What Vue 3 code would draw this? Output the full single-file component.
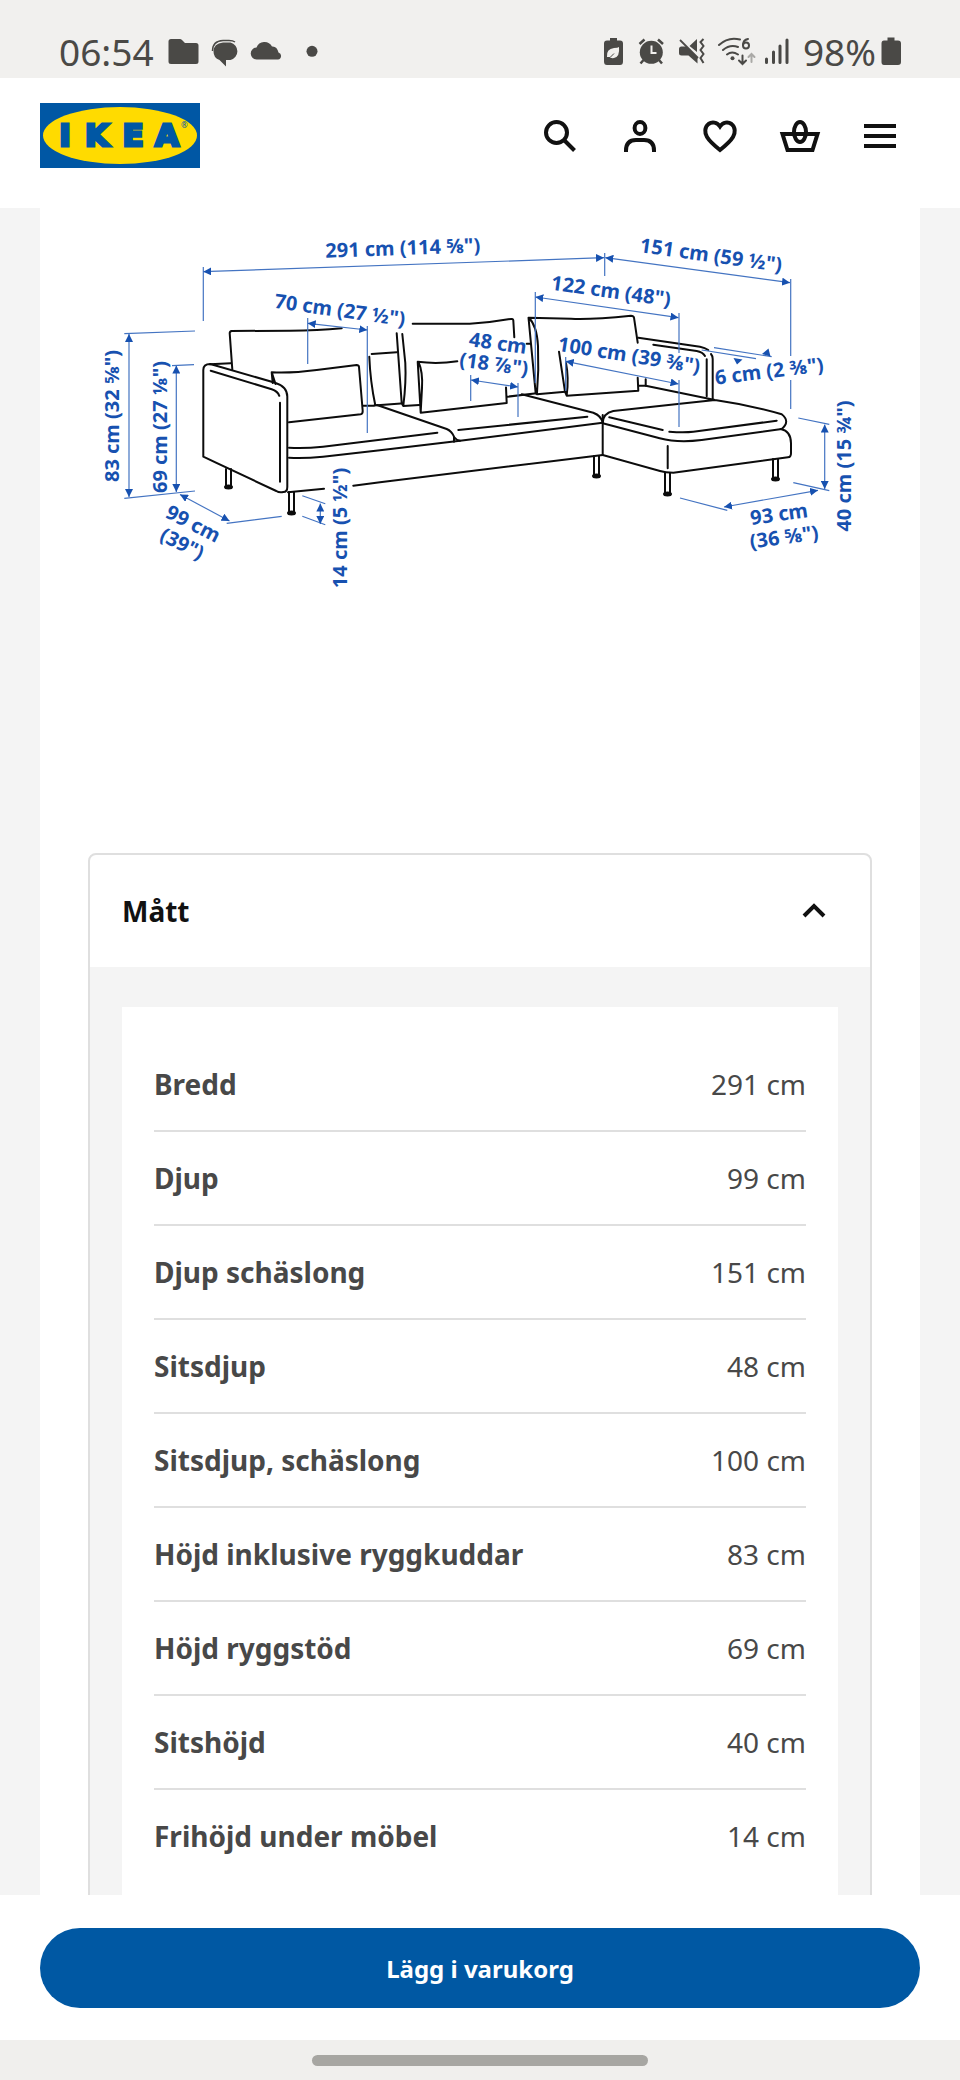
<script setup>
import { ref } from 'vue'

const open = ref(true)

const measurements = [
    { label: 'Bredd', value: '291 cm' },
    { label: 'Djup', value: '99 cm' },
    { label: 'Djup schäslong', value: '151 cm' },
    { label: 'Sitsdjup', value: '48 cm' },
    { label: 'Sitsdjup, schäslong', value: '100 cm' },
    { label: 'Höjd inklusive ryggkuddar', value: '83 cm' },
    { label: 'Höjd ryggstöd', value: '69 cm' },
    { label: 'Sitshöjd', value: '40 cm' },
    { label: 'Frihöjd under möbel', value: '14 cm' },
]

// dimension labels: middle of the baseline and the angle of the text
const labels = [
    { text: '291 cm (114 ⅝")', x: 403, y: 255, angle: -2 },
    { text: '151 cm (59 ½")', x: 710, y: 262, angle: 8 },
    { text: '122 cm (48")', x: 610, y: 298, angle: 8 },
    { text: '70 cm (27 ½")', x: 339, y: 317, angle: 8 },
    { text: '48 cm', x: 497, y: 350, angle: 8 },
    { text: '(18 ⅞")', x: 493, y: 371, angle: 8 },
    { text: '100 cm (39 ⅜")', x: 628, y: 362, angle: 9 },
    { text: '6 cm (2 ⅜")', x: 770, y: 378, angle: -7 },
    { text: '83 cm (32 ⅝")', x: 119, y: 416, angle: -90 },
    { text: '69 cm (27 ⅛")', x: 167, y: 427, angle: -90 },
    { text: '99 cm', x: 190, y: 530, angle: 27 },
    { text: '(39")', x: 179, y: 550, angle: 27 },
    { text: '14 cm (5 ½")', x: 347, y: 528, angle: -90 },
    { text: '93 cm', x: 780, y: 521, angle: -8 },
    { text: '(36 ⅝")', x: 785, y: 544, angle: -8 },
    { text: '40 cm (15 ¾")', x: 851, y: 466, angle: -90 },
]

// legs of the sofa: left edge, top and bottom
const legs = [
    { x: 226, top: 469, bottom: 487 },
    { x: 289, top: 492, bottom: 513 },
    { x: 594, top: 456, bottom: 476 },
    { x: 665, top: 473, bottom: 494 },
    { x: 773, top: 459, bottom: 479 },
]
</script>

<template>
    <div class="app">
        <div class="status-bar">
            <span class="status-text">06:54</span>
            <svg class="notifications" width="152" height="30" viewBox="166 38 152 30" aria-hidden="true">
                <path d="M170 40h9q1 0 2 1l3 3h11q2.500 0 2.500 2.500v16q0 2.500-2.500 2.500h-25q-2.500 0-2.500-2.500v-20q0-2.500 2.500-2.500z" />
                <path d="M222 43.500h7.500a9 9 0 0 1 0 17.500h-4.500v6.500l-6.500-6.500q-6-2-6-8.500q0-8 9.500-9z" />
                <path d="M211.500 52q0-10 10.500-10.500h6q4 0 6 1.500" fill="none" stroke="#4a4946" stroke-width="1.500" />
                <path d="M256 60.500a6 6 0 0 1-.5-12 8.500 8.500 0 0 1 15.500-1q5-.5 6.500 6a3.600 3.600 0 0 1-.5 7z" />
                <circle cx="311" cy="52.300" r="5.500" />
            </svg>
            <svg class="phone-state" width="186" height="30" viewBox="602 38 186 30" aria-hidden="true">
                <path d="M609 39h7v2.500h3q3 0 3 3v18q0 3.500-3 3.500h-13q-3 0-3-3.500v-18q0-3 3-3h3z" />
                <path d="M606 58q-1-8 7-9q4 0 5-1q1 10-5 11q-3 .5-5-1z" fill="#f1f0ee" />
                <path d="M605 60.500q4-1 8-6" fill="none" stroke="#4a4946" stroke-width="1" />
                <circle cx="650.300" cy="53.300" r="11.500" />
                <path d="M638.500 45l5-4.500M662 45l-5-4.500M642.500 61l-3 3.500M658 61l3 3.500" fill="none" stroke="#4a4946" stroke-width="2.500" />
                <path d="M650.500 46.500v7.500h5" fill="none" stroke="#f1f0ee" stroke-width="2" />
                <path d="M678 50q0-2.500 2.500-2.500h5l11 11v6l-9-8h-7q-2.500 0-2.500-2.500zM688.500 47l7.500-7v13z" />
                <path d="M679 41l18 18" fill="none" stroke="#4a4946" stroke-width="1.800" />
                <path d="M702.500 40l-3 3 3 4-3 4 3 4-3 4 3 5" fill="none" stroke="#4a4946" stroke-width="2" />
                <g fill="none" stroke="#4a4946" stroke-width="2" stroke-linecap="round">
                    <path d="M718 46q9-8.500 21-5.500M722 51q7-6 15-3M726 55.500q5-4 11 0" />
                    <path d="M747 40q-5 1-5 6M741.500 56.500v8.500m-3.500-3.500l3.500 3.500 3.500-3.500" />
                    <circle cx="745" cy="46.500" r="3" />
                    <path d="M750.500 63v-8m-3 3l3-3 3 3" stroke="#aaa9a6" />
                    <path d="M765.500 60v3.500M772.500 53v10.500M779 47v16.500M786 41v22.500" stroke-width="3" />
                </g>
                <circle cx="731.500" cy="59.300" r="2" />
            </svg>
            <span class="status-text">98%</span>
            <svg class="battery" width="20" height="30" viewBox="881 38 20 30" aria-hidden="true">
                <path d="M887.500 38.500h7v3h3.500q3 0 3 3v18.500q0 3-3 3h-14q-2.500 0-2.500-3v-18.500q0-3 2.500-3h3.500z" />
            </svg>
        </div>

        <header class="site-header">
            <a class="logo" href="#" aria-label="IKEA">
                <svg width="160" height="65" viewBox="0 0 160 65">
                    <rect width="160" height="65" fill="#0057a4" />
                    <ellipse cx="80" cy="32.500" rx="77" ry="28.500" fill="#ffdb00" />
                    <text class="logo-text" x="25 57 93 127" y="43">IKEA</text>
                    <text class="logo-mark" x="141" y="25">®</text>
                </svg>
            </a>
            <nav class="actions">
                <button type="button" aria-label="Sök">
                    <svg viewBox="0 0 48 48"><circle cx="20.500" cy="20.500" r="10.500" /><path d="M28 28l10.500 10.500" /></svg>
                </button>
                <button type="button" aria-label="Profil">
                    <svg viewBox="0 0 48 48"><ellipse cx="24" cy="16" rx="5.400" ry="6" /><path d="M10 40v-1.500q0-10.500 10-10.500h8q10 0 10 10.500v1.500" /></svg>
                </button>
                <button type="button" aria-label="Favoriter">
                    <svg viewBox="0 0 48 48"><path d="M24 14.500c-3-4.500-8-5-11.500-2.500c-4 3-4 9-1.500 13c3 5 8 9 13 13c5-4 10-8 13-13c2.500-4 2.500-10-1.500-13c-3.500-2.500-8.500-2-11.500 2.500z" /></svg>
                </button>
                <button type="button" aria-label="Varukorg">
                    <svg viewBox="0 0 48 48"><path d="M6.500 22h35l-5 16h-25z" /><ellipse cx="24" cy="20" rx="6" ry="10" /></svg>
                </button>
                <button type="button" aria-label="Meny">
                    <svg viewBox="0 0 48 48"><path d="M8 14h32M8 24h32M8 34h32" /></svg>
                </button>
            </nav>
        </header>

        <main>
            <div class="sheet">
                <svg class="drawing" viewBox="40 208 880 645" role="img" aria-label="Mått">
                    <defs>
                        <marker id="arrow" viewBox="0 0 8 8" refX="8" refY="4" markerWidth="8" markerHeight="8" markerUnits="userSpaceOnUse" orient="auto-start-reverse">
                            <path d="M0 0l8 4-8 4z" fill="#1751b0" />
                        </marker>
                    </defs>
                    <g class="sofa">
                        <!-- left arm -->
                        <path d="M203.300 456.700V370q0-6 7-6l64 18.500q13 4 13 14V487q0 5-4 5q-4 1-7-1z" />
                        <path d="M210 364.300l20.700-1M210.700 370.700l61 18.600q6 2 7.600 6.500M280 402.700v79" />
                        <!-- left back cushion and pillow -->
                        <path d="M232.300 369.300l-2.600-36q0-2 2-2.300l58.300-.3q28 0 51.700-2.400" />
                        <path d="M272.700 383l-1-10.700q20 1 45-2.300l40-5q2 0 2.300 2l3.700 44q0 3-2 3.300l-71.700 8M272 373l3.500 11" />
                        <path d="M363.300 405.700h11M369.300 356.700q1 25 6 48.500M371.700 354l25-1.700M374 405.500l27-2" />
                        <!-- middle back cushion and pillow -->
                        <path d="M396.700 333.300l5 70 1.600 2.700q3-24 2-43l-3-29M403.300 406l16-1" />
                        <path d="M412.700 323.700h57q20-1 38.600-4.400q5-1 5 1l1 17" />
                        <path d="M457.300 361.300q-20 3-39.600.5l3 51 86-9.700-.7-15.700M418.500 362q4.500 10 3.500 26l-1.300 24" />
                        <path d="M507.300 396.700l29.400-3.400M526.700 343.700h3.500" />
                        <!-- right back cushion and pillow -->
                        <path d="M637.700 342.700l-3.700-25q-.5-2-3-2q-40 4-60 3l-42.500-1 7.200 75.600 1.300 1 28.300-2.600M529 318q8 8 9 28 1 24-1 47" />
                        <path d="M559 351.700l6 40 1.700 4 71.600-5-.6-13M566 363q3 15 .7 32M645.700 379.300v6.400h-7" />
                        <!-- right arm -->
                        <path d="M638.300 337.700l61.700 9q5 1 8.300 3.300M711 354q1.700 2 1.700 5v40M653.300 344.700l43.400 6.300q6 1 8.300 5M706.700 359.300v37" />
                        <!-- chaise longue -->
                        <path d="M645.700 385.700l69.300 14.300q35 5 66.700 14.300q9 7 0 14.700l-80 11q-24 3-42-1.700l-57-15q0-10 10.600-12.300l64.400-7 37.300-4" />
                        <path d="M609.300 417.300l53.400 12.700M669.300 431.700q15 1 24 0l83.400-11M780.700 429q10.300 2 10.300 14.300v10q0 4-3 4l-114.700 15.400q-8 0-13.300-1.700l-57.300-16v-40M667.700 446v22.300" />
                        <!-- seats -->
                        <path d="M521.700 394.300l71.600 18.400q8 3 9.400 10l-142.700 18l-80 9.600l-57 6.400q-20 2-34 1" />
                        <path d="M377 405l69.700 24q5 2 7.300 7.700v5M454 437q2 3 6 3.700M458.300 430l129-13.300M289 447.700q15 1 34-1l114.300-14" />
                        <path d="M602.700 455L380 482.300l-26.700 3.400M324 488.700l-36 3.500" />
                        <g v-for="leg in legs" :key="leg.x">
                            <path :d="`M${leg.x} ${leg.top}V${leg.bottom}M${leg.x + 5} ${leg.top}V${leg.bottom}`" />
                            <ellipse class="foot" :cx="leg.x + 2.5" :cy="leg.bottom" rx="3.500" ry="1.500" />
                        </g>
                    </g>
                    <g class="guides">
                        <path d="M203.300 267v54M604.700 253v23M790.700 279v77M790.700 380v29M535.300 292v91M679 313v40M679 380v47M565.700 357v34" />
                        <path d="M307.700 318v46M367.300 326v107M470.700 375v26M518 383v34" />
                        <path d="M714 347.700l57.700 9M701.700 350l54.300 8.700M124.300 333.700l70.700-2.700M124.300 498.300l70.700-7.300M172 365.700l22-1" />
                        <path d="M226.700 523.300l55-7M302.300 495.700l23 8M302.300 516.300l23 8.400M798.300 418l31 6.300M793.300 482.700l36 8M680 498l47.300 12.300" />
                    </g>
                    <g class="guides arrows">
                        <path d="M203.300 271.700L604 257.700" />
                        <path d="M605.300 257.700L790 282.700" />
                        <path d="M535.300 297L678.500 317.700" />
                        <path d="M565.700 361.300L678.500 384" />
                        <path d="M307.700 323.300L367.300 330" />
                        <path d="M471 380L518 387" />
                        <path d="M129 334V497" />
                        <path d="M176.300 365.500V492" />
                        <path d="M180 494.500L229.500 521" />
                        <path d="M320.300 503.500V524" />
                        <path d="M824.700 424.500V489" />
                        <path d="M724 507L818 490.300" />
                    </g>
                    <path d="M762 354l6.500-5.500 2 8zM733.500 358l9 1.500-5.500 5z" fill="#1751b0" />
                    <text
                        v-for="label in labels"
                        :key="label.text"
                        class="dimension"
                        :transform="`translate(${label.x} ${label.y}) rotate(${label.angle})`"
                    >{{ label.text }}</text>
                </svg>

                <section class="accordion">
                    <h2>
                        <button type="button" class="accordion-toggle" :aria-expanded="open" @click="open = !open">
                            <span>Mått</span>
                            <svg :class="{ closed: !open }" viewBox="0 0 48 48"><path d="M14 29l10-10 10 10" /></svg>
                        </button>
                    </h2>
                    <div v-if="open" class="panel">
                        <div class="card">
                            <table>
                                <tbody>
                                    <tr v-for="row in measurements" :key="row.label">
                                        <th scope="row">{{ row.label }}</th>
                                        <td>{{ row.value }}</td>
                                    </tr>
                                </tbody>
                            </table>
                        </div>
                    </div>
                </section>
            </div>
        </main>

        <div class="buy-bar">
            <button type="button">Lägg i varukorg</button>
        </div>
        <div class="gesture-bar"><span></span></div>
    </div>
</template>

<style>
body {
    margin: 0;
}
</style>

<style scoped>
.app {
    display: flex;
    flex-direction: column;
    height: 100vh;
    background: #fff;
    color: #484848;
    font-family: "Noto Sans", sans-serif;
}

button {
    border: none;
    padding: 0;
    background: none;
    font-family: inherit;
    cursor: pointer;
}

.status-bar {
    display: flex;
    flex: none;
    align-items: center;
    box-sizing: border-box;
    height: 78px;
    padding: 26px 59px 0 59px;
    background: #f1f0ee;
    color: #4a4946;
    fill: #4a4946;
}

.status-text {
    font-size: 37px;
    line-height: 52px;
}

.notifications {
    margin-left: 13px;
}

.phone-state {
    margin-left: auto;
    margin-right: 14px;
}

.battery {
    margin-left: 5px;
}

.site-header {
    display: flex;
    flex: none;
    align-items: center;
    justify-content: space-between;
    padding: 25px 40px 40px;
}

.logo,
.logo svg {
    display: block;
}

.logo-text {
    fill: #0057a4;
    stroke: #0057a4;
    stroke-width: 3;
    font-family: "DejaVu Sans", sans-serif;
    font-size: 31px;
    font-weight: 700;
    text-anchor: middle;
}

.logo-mark {
    fill: #0057a4;
    font-size: 8px;
}

.actions {
    display: flex;
}

.actions button {
    display: flex;
    justify-content: center;
    width: 80px;
}

.actions svg,
.accordion-toggle svg {
    width: 48px;
    height: 48px;
    fill: none;
    stroke: #111;
    stroke-width: 4;
}

main {
    flex: 1;
    min-height: 0;
    overflow-y: auto;
    scrollbar-width: none;
    padding: 0 40px;
    background: #f4f4f4;
}

.sheet {
    background: #fff;
}

.drawing {
    display: block;
    width: 100%;
}

.sofa {
    fill: none;
    stroke: #0c0c0c;
    stroke-width: 2;
    stroke-linecap: round;
    stroke-linejoin: round;
}

.foot {
    fill: #0c0c0c;
}

.guides {
    fill: none;
    stroke: #4474c2;
    stroke-width: 1.2;
}

.arrows path {
    marker-start: url(#arrow);
    marker-end: url(#arrow);
}

.dimension {
    fill: #1751b0;
    font-size: 20px;
    font-weight: 700;
    text-anchor: middle;
}

.accordion {
    margin: 0 48px;
    border: 2px solid #dfdfdf;
    border-radius: 8px;
    overflow: hidden;
}

h2 {
    margin: 0;
}

.accordion-toggle {
    display: flex;
    align-items: center;
    justify-content: space-between;
    width: 100%;
    height: 112px;
    padding: 0 32px;
    color: #111;
    font-size: 28px;
    font-weight: 700;
}

.accordion-toggle .closed {
    transform: rotate(180deg);
}

.panel {
    padding: 40px 32px;
    background: #f4f4f4;
}

.card {
    padding: 31px 32px;
    background: #fff;
}

table {
    width: 100%;
    border-collapse: collapse;
    font-size: 28px;
    line-height: 40px;
}

th,
td {
    padding: 26px 0;
    border-bottom: 2px solid #dfdfdf;
}

th {
    font-weight: 700;
    text-align: left;
}

td {
    text-align: right;
}

tr:last-child th,
tr:last-child td {
    border-bottom: none;
}

.buy-bar {
    flex: none;
    padding: 33px 40px 32px;
}

.buy-bar button {
    width: 100%;
    height: 80px;
    border-radius: 40px;
    background: #0058a3;
    color: #fff;
    font-size: 24px;
    font-weight: 700;
}

.gesture-bar {
    display: flex;
    flex: none;
    justify-content: center;
    padding: 15px 0 14px;
    background: #f0efed;
}

.gesture-bar span {
    width: 35%;
    height: 11px;
    border-radius: 6px;
    background: #a7a6a2;
}
</style>
